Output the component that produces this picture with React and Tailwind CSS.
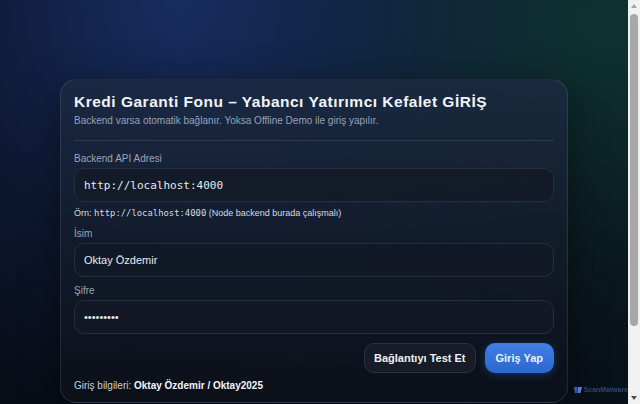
import React from 'react';

const sans = "font-['Liberation_Sans',Arial,sans-serif]";
const mono = "font-['DejaVu_Sans_Mono','Liberation_Mono',monospace]";

const Field = ({ label, children, className = '' }) => (
    <div className={className}>
        <label className="block text-[10px] leading-[16px] text-[#9aa6b6] mb-[1px]">{label}</label>
        {children}
    </div>
);

const inputCls =
    'block w-full h-[34px] rounded-[10px] border border-[#252f42] bg-[#131925]/80 px-[9px] text-[#e6eaf0] outline-none';

export default function App() {
    return (
        <div
            className={`${sans} min-h-screen pr-[12px] py-[79px] bg-[#070b14] bg-[radial-gradient(ellipse_at_28%_0%,#172d61_0%,rgba(23,45,97,0.35)_38%,transparent_65%),radial-gradient(ellipse_at_95%_5%,#0f3330_0%,rgba(15,51,48,0.3)_40%,transparent_70%)]`}
        >
            <div className="w-[508px] mx-auto rounded-[16px] border border-white/10 bg-linear-to-b from-[#1c2b42]/80 to-[#0c1019]/90 px-[13px] pt-[12px] pb-[8px] shadow-[0_10px_40px_rgba(0,0,0,0.45)]">
                <h1 className="text-[15.5px] leading-[20px] font-bold tracking-[0.5px] text-[#f1f4f8]">
                    Kredi Garanti Fonu – Yabancı Yatırımcı Kefalet GİRİŞ
                </h1>
                <p className="mt-[1px] text-[10px] leading-[16px] text-[#94a3b8]">
                    Backend varsa otomatik bağlanır. Yoksa Offline Demo ile giriş yapılır.
                </p>

                <div className="mt-[11px] mb-[10px] h-px bg-white/10" />

                <Field label="Backend API Adresi">
                    <input className={`${inputCls} ${mono} text-[11px]`} defaultValue="http://localhost:4000" />
                </Field>
                <p className="mt-[4px] text-[9px] leading-[14px] text-[#d4dae3]">
                    Örn: <code className={`${mono} text-[8.9px]`}>http://localhost:4000</code> (Node backend burada çalışmalı)
                </p>

                <Field label="İsim" className="mt-[6px]">
                    <input className={`${inputCls} text-[11px]`} defaultValue="Oktay Özdemir" />
                </Field>

                <Field label="Şifre" className="mt-[6px]">
                    <input type="password" className={`${inputCls} text-[11px]`} defaultValue="Oktay2025" />
                </Field>

                <div className="mt-[9px] flex justify-end gap-[9px]">
                    <button className="h-[30px] px-[9px] rounded-[10px] border border-[#2a3242] bg-[#171c26] text-[11px] font-bold text-[#eef1f5]">
                        Bağlantıyı Test Et
                    </button>
                    <button className="h-[30px] px-[11px] rounded-[10px] bg-linear-to-b from-[#3d80e6] to-[#2d66cf] text-[11px] font-bold text-[#eaf1ff] shadow-[0_2px_8px_rgba(45,102,207,0.35)]">
                        Giriş Yap
                    </button>
                </div>

                <p className="mt-[5px] text-[10px] leading-[16px] text-[#c9d1dc]">
                    Giriş bilgileri: <b className="text-[#f3f5f8]">Oktay Özdemir / Oktay2025</b>
                </p>
            </div>

            <div className="fixed right-[12px] bottom-[9px] flex items-center gap-[2px] text-[7px] font-bold text-[#3d5391]/80">
                <svg width="8" height="8" viewBox="0 0 8 8">
                    <path d="M0 1h3.5v6H1z" fill="#3b5bb0" />
                    <path d="M4 1h4L6.5 7H4z" fill="#5a7bd0" />
                </svg>
                ScanMalware
            </div>

            {/* page scrollbar */}
            <div className="fixed top-0 right-0 h-full w-[12px] bg-[#f1f1f1] flex flex-col items-center">
                <div className="h-[12px] flex items-center justify-center">
                    <div className="w-0 h-0 border-x-[3.5px] border-x-transparent border-b-[4px] border-b-[#a3a3a3]" />
                </div>
                <div className="w-[8px] h-[312px] mt-[2px] rounded-full bg-[#a8a8a8]" />
                <div className="mt-auto h-[12px] flex items-center justify-center">
                    <div className="w-0 h-0 border-x-[3.5px] border-x-transparent border-t-[4px] border-t-[#505050]" />
                </div>
            </div>
        </div>
    );
}
